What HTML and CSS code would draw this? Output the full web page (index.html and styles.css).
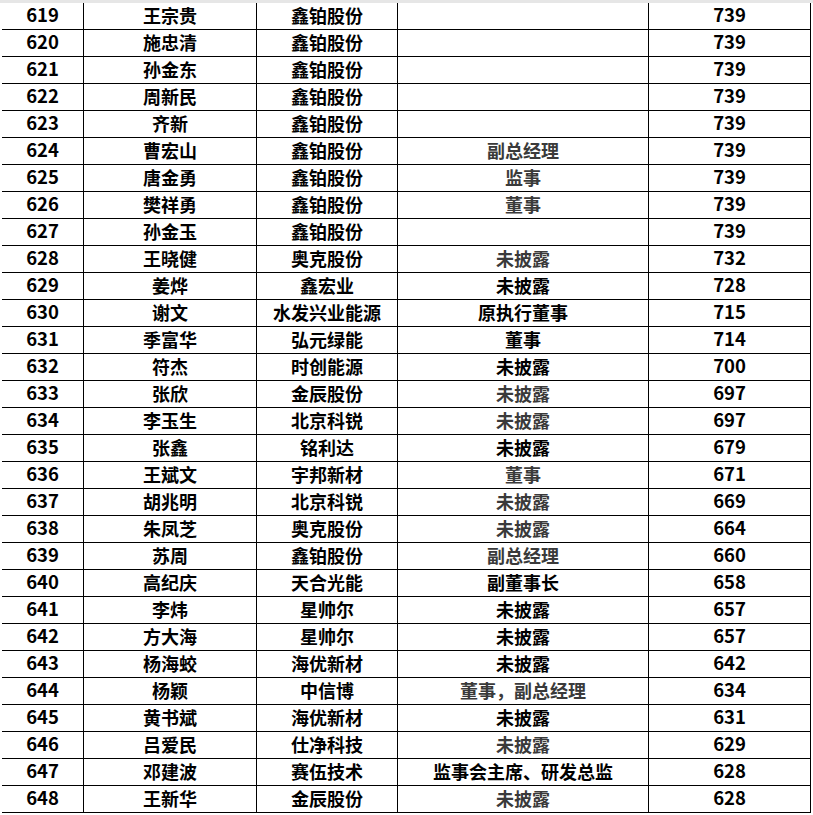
FILE: index.html
```html
<!DOCTYPE html>
<html lang="zh-CN">
<head>
<meta charset="utf-8">
<title>表格</title>
<link rel="stylesheet" href="styles.css">
</head>
<body>
<div class="sheet">
  <div class="row"><div class="c n">619</div><div class="c">王宗贵</div><div class="c">鑫铂股份</div><div class="c"></div><div class="c n">739</div></div>
  <div class="row"><div class="c n">620</div><div class="c">施忠清</div><div class="c">鑫铂股份</div><div class="c"></div><div class="c n">739</div></div>
  <div class="row"><div class="c n">621</div><div class="c">孙金东</div><div class="c">鑫铂股份</div><div class="c"></div><div class="c n">739</div></div>
  <div class="row"><div class="c n">622</div><div class="c">周新民</div><div class="c">鑫铂股份</div><div class="c"></div><div class="c n">739</div></div>
  <div class="row"><div class="c n">623</div><div class="c">齐新</div><div class="c">鑫铂股份</div><div class="c"></div><div class="c n">739</div></div>
  <div class="row"><div class="c n">624</div><div class="c">曹宏山</div><div class="c">鑫铂股份</div><div class="c g">副总经理</div><div class="c n">739</div></div>
  <div class="row"><div class="c n">625</div><div class="c">唐金勇</div><div class="c">鑫铂股份</div><div class="c g">监事</div><div class="c n">739</div></div>
  <div class="row"><div class="c n">626</div><div class="c">樊祥勇</div><div class="c">鑫铂股份</div><div class="c g">董事</div><div class="c n">739</div></div>
  <div class="row"><div class="c n">627</div><div class="c">孙金玉</div><div class="c">鑫铂股份</div><div class="c"></div><div class="c n">739</div></div>
  <div class="row"><div class="c n">628</div><div class="c">王晓健</div><div class="c">奥克股份</div><div class="c g">未披露</div><div class="c n">732</div></div>
  <div class="row"><div class="c n">629</div><div class="c">姜烨</div><div class="c">鑫宏业</div><div class="c">未披露</div><div class="c n">728</div></div>
  <div class="row"><div class="c n">630</div><div class="c">谢文</div><div class="c">水发兴业能源</div><div class="c">原执行董事</div><div class="c n">715</div></div>
  <div class="row"><div class="c n">631</div><div class="c">季富华</div><div class="c">弘元绿能</div><div class="c">董事</div><div class="c n">714</div></div>
  <div class="row"><div class="c n">632</div><div class="c">符杰</div><div class="c">时创能源</div><div class="c">未披露</div><div class="c n">700</div></div>
  <div class="row"><div class="c n">633</div><div class="c">张欣</div><div class="c">金辰股份</div><div class="c g">未披露</div><div class="c n">697</div></div>
  <div class="row"><div class="c n">634</div><div class="c">李玉生</div><div class="c">北京科锐</div><div class="c g">未披露</div><div class="c n">697</div></div>
  <div class="row"><div class="c n">635</div><div class="c">张鑫</div><div class="c">铭利达</div><div class="c">未披露</div><div class="c n">679</div></div>
  <div class="row"><div class="c n">636</div><div class="c">王斌文</div><div class="c">宇邦新材</div><div class="c g">董事</div><div class="c n">671</div></div>
  <div class="row"><div class="c n">637</div><div class="c">胡兆明</div><div class="c">北京科锐</div><div class="c g">未披露</div><div class="c n">669</div></div>
  <div class="row"><div class="c n">638</div><div class="c">朱凤芝</div><div class="c">奥克股份</div><div class="c g">未披露</div><div class="c n">664</div></div>
  <div class="row"><div class="c n">639</div><div class="c">苏周</div><div class="c">鑫铂股份</div><div class="c g">副总经理</div><div class="c n">660</div></div>
  <div class="row"><div class="c n">640</div><div class="c">高纪庆</div><div class="c">天合光能</div><div class="c">副董事长</div><div class="c n">658</div></div>
  <div class="row"><div class="c n">641</div><div class="c">李炜</div><div class="c">星帅尔</div><div class="c">未披露</div><div class="c n">657</div></div>
  <div class="row"><div class="c n">642</div><div class="c">方大海</div><div class="c">星帅尔</div><div class="c">未披露</div><div class="c n">657</div></div>
  <div class="row"><div class="c n">643</div><div class="c">杨海蛟</div><div class="c">海优新材</div><div class="c">未披露</div><div class="c n">642</div></div>
  <div class="row"><div class="c n">644</div><div class="c">杨颖</div><div class="c">中信博</div><div class="c g">董事，副总经理</div><div class="c n">634</div></div>
  <div class="row"><div class="c n">645</div><div class="c">黄书斌</div><div class="c">海优新材</div><div class="c">未披露</div><div class="c n">631</div></div>
  <div class="row"><div class="c n">646</div><div class="c">吕爱民</div><div class="c">仕净科技</div><div class="c g">未披露</div><div class="c n">629</div></div>
  <div class="row"><div class="c n">647</div><div class="c">邓建波</div><div class="c">赛伍技术</div><div class="c">监事会主席、研发总监</div><div class="c n">628</div></div>
  <div class="row"><div class="c n">648</div><div class="c">王新华</div><div class="c">金辰股份</div><div class="c g">未披露</div><div class="c n">628</div></div>
</div>
</body>
</html>
```
FILE: styles.css
```css
html, body {
  margin: 0;
  padding: 0;
  background: #ffffff;
}
body {
  width: 813px;
  height: 815px;
  overflow: hidden;
  background: linear-gradient(#e6e6e6, #e6e6e6) top left / 100% 3px no-repeat, #ffffff;
  font-family: "Noto Sans CJK SC", "Noto Sans", sans-serif;
}
.sheet {
  margin: 3px 0 0 2px;
  width: 809px;
}
.row {
  display: grid;
  grid-template-columns: 82px 173px 141px 251px 162px;
  height: 27px;
}
.c {
  box-sizing: border-box;
  border-right: 1px solid #000;
  border-bottom: 1px solid #000;
  display: flex;
  align-items: center;
  justify-content: center;
  font-size: 18px;
  font-weight: 700;
  color: #000;
  line-height: 1;
  white-space: nowrap;
  padding-bottom: 3px;
}
.c.n {
  font-size: 18.5px;
}
.c.g {
  color: #3a3a3a;
}
```
